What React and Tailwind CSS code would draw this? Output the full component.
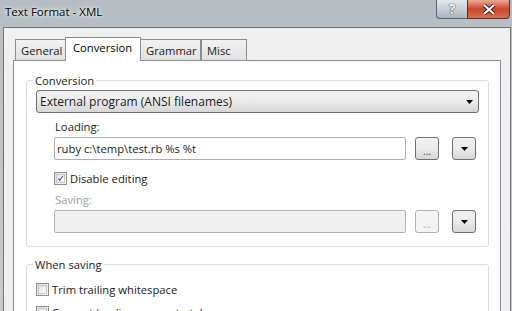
import { useState } from 'react';

// small win7-ish widgets
function Checkbox({ checked }) {
  return (
    <span className="flex h-[13px] w-[13px] shrink-0 items-center justify-center border border-[#8e8f8f] bg-gradient-to-br from-[#dcdcdc] to-[#fbfbfb]">
      <span className="flex h-[9px] w-[9px] items-center justify-center border border-[#c5c5c5] bg-gradient-to-br from-[#e6e6e6] to-[#fdfdfd]">
        {checked && (
          <svg width="11" height="11" viewBox="0 0 11 11" className="-mt-[1px]">
            <path d="M2 5.5 L4.3 8.2 L9 1.5" fill="none" stroke="#4a5f97" strokeWidth="1.8" />
          </svg>
        )}
      </span>
    </span>
  );
}

function Arrow({ color = '#000' }) {
  return (
    <svg width="7" height="4" viewBox="0 0 7 4">
      <path d="M0 0 H7 L3.5 4 Z" fill={color} />
    </svg>
  );
}

function SmallButton({ children, disabled }) {
  return (
    <div
      className={
        'flex h-[23px] w-[24px] items-center justify-center rounded-[3px] border ' +
        (disabled
          ? 'border-[#adb2b5] bg-[#f4f4f4]'
          : 'border-[#707070] bg-gradient-to-b from-[#f2f2f2] via-[#ebebeb] to-[#d6d6d6]')
      }
    >
      {children}
    </div>
  );
}

function EditRow({ value, disabled }) {
  return (
    <div className="flex items-center">
      <div
        className={
          'flex h-[23px] w-[352px] items-center rounded-[2px] border px-[2px] ' +
          (disabled ? 'border-[#adb2b5] bg-[#f0f0f0]' : 'border-[#abadb3] bg-white')
        }
      >
        {value}
      </div>
      <div className="ml-[9px]">
        <SmallButton disabled={disabled}>
          <span className={'mt-[5px] text-[10px] leading-none ' + (disabled ? 'text-[#a0a0a0]' : 'text-[#3c3cb4]')}>...</span>
        </SmallButton>
      </div>
      <div className="ml-[13px]">
        <SmallButton>
          <Arrow />
        </SmallButton>
      </div>
    </div>
  );
}

const tabs = [
  { name: 'General', w: 'w-[51px]' },
  { name: 'Conversion', w: 'w-[76px]' },
  { name: 'Grammar', w: 'w-[61px]' },
  { name: 'Misc', w: 'w-[46px]' },
];

export default function App() {
  const [tab, setTab] = useState('Conversion');

  return (
    <div
      className="flex h-[311px] w-[512px] flex-col overflow-hidden bg-gradient-to-b from-[#b7bcc1] to-[#c8cbce] text-[11.25px] leading-[15px] text-[#1a1a1a]"
      style={{ fontFamily: '"Open Sans", "Noto Sans", sans-serif' }}
    >
      {/* title bar */}
      <div className="flex h-[27px] shrink-0 items-start justify-between">
        <div className="pl-[5px] pt-[4px] text-[11.5px] text-black [text-shadow:0_0_6px_#fff,0_0_3px_#fff]">Text Format - XML</div>
        <div className="mr-[2px] flex h-[19px]">
          <div className="flex w-[31px] items-center justify-center rounded-bl-[4px] border border-r-0 border-t-0 border-[#5d646b] bg-gradient-to-b from-[#e4e8ec] via-[#c9cfd6] to-[#aab3bd]">
            <span className="text-[14px] font-bold leading-none text-[#f4f6f8] [text-shadow:0_0_1px_#333,0_0_1px_#333]">?</span>
          </div>
          <div className="flex w-[43px] items-center justify-center rounded-br-[4px] border border-t-0 border-[#6b2a1f] bg-gradient-to-b from-[#e9a897] via-[#c9452b] to-[#d5704f]">
            <svg width="14" height="11" viewBox="0 0 14 11">
              <path d="M2 1 L12 10 M12 1 L2 10" stroke="#4a1a10" strokeWidth="4" />
              <path d="M2 1 L12 10 M12 1 L2 10" stroke="#fff" strokeWidth="2.2" />
            </svg>
          </div>
        </div>
      </div>

      {/* window body */}
      <div className="ml-[3px] mr-[1px] flex flex-1 flex-col border-l border-r border-t border-[#6f7478] bg-[#f0f0f0] pl-[9px] pr-[9px] pt-[9px]">
        {/* tab strip */}
        <div className="ml-[2px] flex h-[23px] items-end">
          {tabs.map((t) => {
            const active = t.name === tab;
            return (
              <div
                key={t.name}
                onClick={() => setTab(t.name)}
                className={
                  'relative z-10 flex cursor-default items-start whitespace-nowrap border border-b-0 border-[#898c95] px-[5px] ' +
                  t.w +
                  (active
                    ? ' -mb-px -ml-[1px] -mr-[1px] h-[24px] bg-white pl-[7px] pt-[2px] text-black'
                    : ' h-[21px] bg-gradient-to-b from-[#f2f2f2] to-[#e1e1e1] pt-[3px]')
                }
              >
                {t.name}
              </div>
            );
          })}
        </div>

        {/* tab page */}
        <div className="flex-1 border border-[#898c95] bg-white pl-[12px] pr-[11px]">
          <fieldset className="mt-[12px] rounded-[3px] border border-[#d5dfe5] px-[9px] pb-[13px]">
            <legend className="-ml-[3px] px-[2px]">Conversion</legend>
            <div className="mt-[2px] flex h-[23px] items-center justify-between rounded-[3px] border border-[#707070] bg-gradient-to-b from-[#f2f2f2] via-[#ebebeb] to-[#d6d6d6] pl-[3px] pr-[5px] text-[12px]">
              <span>External program (ANSI filenames)</span>
              <Arrow />
            </div>

            <div className="ml-[18px]">
              <div className="mt-[6px] pl-[1px]">Loading:</div>
              <div className="mt-[3px]">
                <EditRow value="ruby c:\temp\test.rb %s %t" />
              </div>

              <label className="mt-[11px] flex items-center gap-[3px]">
                <Checkbox checked />
                <span>Disable editing</span>
              </label>

              <div className="mt-[6px] pl-[1px] text-[#a0a0a0]">Saving:</div>
              <div className="mt-[3px]">
                <EditRow value="" disabled />
              </div>
            </div>
          </fieldset>

          <fieldset className="mt-[10px] rounded-[3px] border border-[#d5dfe5] px-[9px] pb-[13px]">
            <legend className="-ml-[3px] px-[2px]">When saving</legend>
            <label className="mt-[10px] flex items-center gap-[3px]">
              <Checkbox />
              <span>Trim trailing whitespace</span>
            </label>
            <label className="mt-[8px] flex items-center gap-[3px]">
              <Checkbox />
              <span>Convert leading spaces to tabs</span>
            </label>
          </fieldset>
        </div>
      </div>
    </div>
  );
}
